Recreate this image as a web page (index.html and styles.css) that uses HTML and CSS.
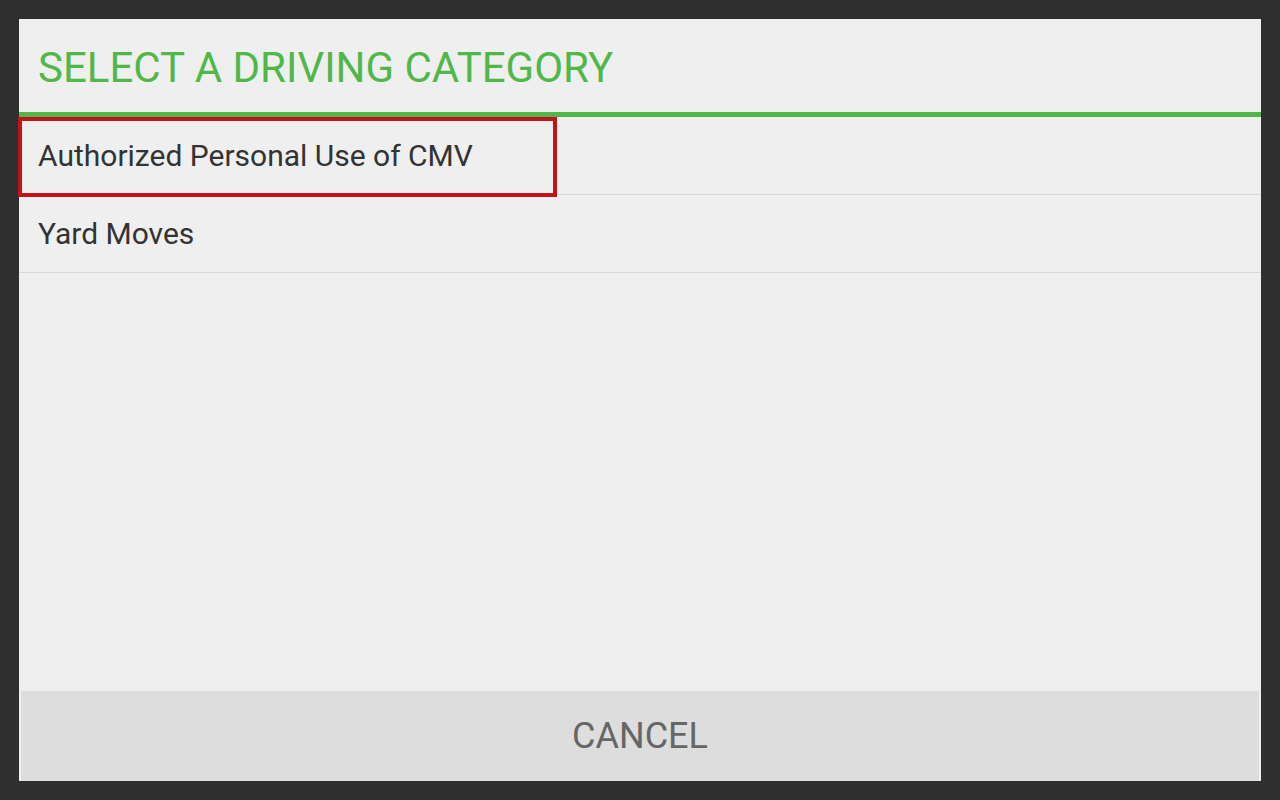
FILE: index.html
```html
<!DOCTYPE html>
<html lang="en">
<head>
    <title>Select a driving category</title>
    <link rel="stylesheet" href="styles.css">
</head>
<body>
    <div class="dialog">
        <div class="dialog-title">SELECT A DRIVING CATEGORY</div>
        <ul class="options">
            <li class="option">
                Authorized Personal Use of CMV
                <span class="highlight"></span>
            </li>
            <li class="option">Yard Moves</li>
        </ul>
        <div class="actions">
            <button class="cancel">CANCEL</button>
        </div>
    </div>
</body>
</html>
```

FILE: styles.css
```css
html, body {
    margin: 0;
    height: 100%;
}
body {
    background-color: #2f2f2f;
    font-family: Roboto, "Liberation Sans", sans-serif;
    padding: 19px;
    box-sizing: border-box;
}
.dialog {
    width: 1242px;
    height: 762px;
    background-color: #efefef;
    display: flex;
    flex-direction: column;
}
.dialog-title {
    height: 98px;
    box-sizing: border-box;
    padding: 21px 19px 0;
    color: #50b848;
    font-size: 42px;
    line-height: 56px;
    border-bottom: 5px solid #50b848;
}
.options {
    list-style: none;
    margin: 0;
    padding: 0;
    flex: 1;
}
.option {
    position: relative;
    height: 78px;
    box-sizing: border-box;
    padding: 0 19px;
    display: flex;
    align-items: center;
    font-size: 30px;
    color: #333333;
    border-bottom: 1px solid #d8d8d8;
}
.highlight {
    position: absolute;
    left: -1px;
    top: 0;
    width: 539px;
    height: 80px;
    box-sizing: border-box;
    border: 4px solid #c0141a;
}
.actions {
    padding: 0 2px;
}
.cancel {
    width: 100%;
    height: 90px;
    border: none;
    background-color: #dddddd;
    color: #666666;
    font-family: Roboto, "Liberation Sans", sans-serif;
    font-size: 36px;
}
```
